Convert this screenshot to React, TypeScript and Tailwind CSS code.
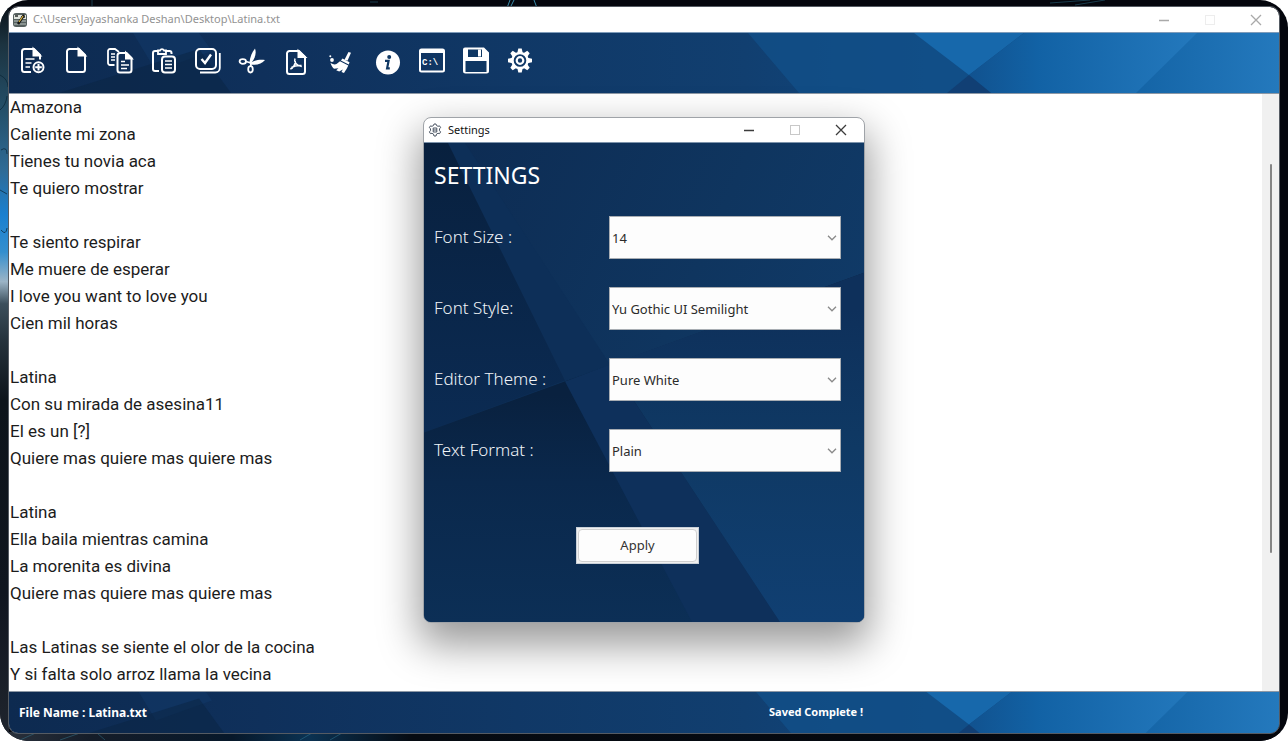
import type { ReactNode } from "react";

const lyrics = `Amazona
Caliente mi zona
Tienes tu novia aca
Te quiero mostrar

Te siento respirar
Me muere de esperar
I love you want to love you
Cien mil horas

Latina
Con su mirada de asesina11
El es un [?]
Quiere mas quiere mas quiere mas

Latina
Ella baila mientras camina
La morenita es divina
Quiere mas quiere mas quiere mas

Las Latinas se siente el olor de la cocina
Y si falta solo arroz llama la vecina`;

type Tool = { label: string; icon: ReactNode };

const fileTools: Tool[] = [
  {
    label: "New file",
    icon: (
      <>
        <path d="M13 25H6.500a2.500 2.500 0 0 1-2.500-2.500V4.500A2.500 2.500 0 0 1 6.500 2H16l6 6v4.500" />
        <path d="M15.500 2v6.500H22z" fill="currentColor" />
        <path d="M7.500 12h9M7.500 16h6M7.500 20h4.500" strokeWidth="1.600" />
        <circle cx="20.500" cy="20.300" r="5" />
        <path d="M20.500 17v6.600M17.200 20.300h6.600" />
      </>
    ),
  },
  {
    label: "Open file",
    icon: (
      <>
        <path d="M7.500 2H17l6 6v14.500a2.500 2.500 0 0 1-2.500 2.500h-13A2.500 2.500 0 0 1 5 22.500v-18A2.500 2.500 0 0 1 7.500 2z" />
        <path d="M16.500 2v6.500H23z" fill="currentColor" />
      </>
    ),
  },
  {
    label: "Copy",
    icon: (
      <>
        <path d="M8.500 18H4a2 2 0 0 1-2-2V4a2 2 0 0 1 2-2h5l4 3" strokeWidth="1.800" />
        <path d="M5 7h4M5 10h4M5 13h4" strokeWidth="1.400" />
        <path d="M14 6h6.500l5 5v12a2.500 2.500 0 0 1-2.500 2.500h-9a2.500 2.500 0 0 1-2.500-2.500V8.500A2.500 2.500 0 0 1 14 6z" />
        <path d="M20 6v5.500h5.500z" fill="currentColor" />
        <path d="M15 14.500h4M15 18h8M15 21.500h6" strokeWidth="1.600" />
      </>
    ),
  },
  {
    label: "Paste",
    icon: (
      <>
        <path d="M8 4H5a2 2 0 0 0-2 2v16a2 2 0 0 0 2 2h4M15 4h4.500a2 2 0 0 1 2 2v1" />
        <path d="M8 3.500h2a2.200 2.200 0 0 1 4 0h2V7H8z" strokeWidth="1.800" />
        <rect x="12" y="9.500" width="13" height="16" rx="3" />
        <path d="M15 14h7M15 17.500h7M15 21h7" strokeWidth="1.600" />
      </>
    ),
  },
  {
    label: "Select all",
    icon: (
      <>
        <rect x="2" y="2" width="20" height="20" rx="4" />
        <path d="m7.500 12 3.500 4 6-8.500" strokeWidth="2.400" />
        <path d="M25.800 6v15a4.500 4.500 0 0 1-4.500 4.500H6" strokeWidth="1.800" />
      </>
    ),
  },
  {
    label: "Cut",
    icon: (
      <>
        <ellipse cx="4.800" cy="14.500" rx="3.200" ry="2.300" strokeWidth="1.800" />
        <ellipse cx="12.500" cy="22.300" rx="2.300" ry="3.200" strokeWidth="1.800" />
        <path d="M8 14.500 13 16M12.800 19l.2-4" strokeWidth="1.800" />
        <path d="M11.500 15.500C12 10 14 5 17 1.500c1.500 4 .3 9-3 13.500z" fill="currentColor" stroke="none" />
        <path d="M11.500 16.500c4-3 10-4.500 15.500-3.500-3 4-8.500 5.500-14 4.500z" fill="currentColor" stroke="none" />
      </>
    ),
  },
  {
    label: "Export PDF",
    icon: (
      <>
        <path d="M7.500 4H17l6 6v14.500a2.500 2.500 0 0 1-2.500 2.500h-13A2.500 2.500 0 0 1 5 24.500v-18A2.500 2.500 0 0 1 7.500 4z" />
        <path d="M16.500 4v6H23z" fill="currentColor" />
        <path d="M13 11.500c-1.300 3 1.500 7.500 6.800 8M13.300 14c.3 3-2 7-5 8M9.500 20.500c2.500-1.500 6-2.300 10-2" strokeWidth="1.500" />
      </>
    ),
  },
  {
    label: "Clear",
    icon: (
      <g fill="currentColor" stroke="none">
        <path d="m22.500 5 2.500.8-3.500 8-3-1z" />
        <path d="m16.500 11.500 7 3.700-.8 2.300-7.800-4z" />
        <path d="m14 14.300 8.300 4.200c-.8 2-2.300 4.500-4.300 7.500l-2.500-1 1.300-2.500-3.600 2-3-1.200 2.300-2-4.500.4c-1.800-1.600-2.900-3.500-3.500-5.700 2.500 1.500 4.500 1.700 6 1z" />
        <circle cx="6" cy="13" r="1.900" />
        <circle cx="4.300" cy="9.300" r="1" />
      </g>
    ),
  },
];

const appTools: Tool[] = [
  {
    label: "About",
    icon: (
      <>
        <circle cx="14" cy="15.500" r="12" fill="currentColor" stroke="none" />
        <circle cx="15.200" cy="10" r="2" fill="#0f3763" stroke="none" />
        <path d="M11 13.800h3.600l-1.500 7.500h2.700" stroke="#0f3763" strokeWidth="2.200" />
      </>
    ),
  },
  {
    label: "Command line",
    icon: (
      <>
        <rect x="2" y="2.500" width="24" height="22" rx="1.500" />
        <path d="M2 4h24" strokeWidth="4" />
        <text x="4" y="17.500" fill="currentColor" stroke="none" className="font-['Liberation_Mono',monospace] text-[9px] font-bold">
          C:\
        </text>
      </>
    ),
  },
  {
    label: "Save",
    icon: (
      <>
        <path d="M1 2.500A2 2 0 0 1 3 .500h19l5 5V24a2.500 2.500 0 0 1-2.500 2.500h-21A2.500 2.500 0 0 1 1 24z" fill="currentColor" stroke="none" />
        <path d="M6 2.500h14v7.500H6zM3.500 14h21v11h-21z" fill="#0f3763" stroke="none" />
        <path d="M16 2.500h3v7h-3z" fill="currentColor" stroke="none" />
      </>
    ),
  },
  {
    label: "Settings",
    icon: (
      <>
        <g fill="currentColor" stroke="none">
          {[0, 45, 90, 135, 180, 225, 270, 315].map((angle) => (
            <path key={angle} d="m12.300 1.500h3.400l1 4.500h-5.400z" transform={`rotate(${angle} 14 13.500)`} />
          ))}
        </g>
        <circle cx="14" cy="13.500" r="7.500" strokeWidth="2.400" />
        <circle cx="14" cy="13.500" r="3.300" strokeWidth="2.200" />
      </>
    ),
  },
];

function ToolButton({ label, icon }: Tool) {
  return (
    <button type="button" aria-label={label} className="flex w-11 justify-center text-white">
      <svg viewBox="0 0 28 28" className="size-7 overflow-visible" fill="none" stroke="currentColor" strokeWidth="2" aria-hidden="true">
        {icon}
      </svg>
    </button>
  );
}

function BarBackdrop() {
  return (
    <svg viewBox="0 0 1270 60" preserveAspectRatio="xMidYMid slice" className="absolute inset-0 -z-10 size-full" aria-hidden="true">
      <defs>
        <linearGradient id="bar-base">
          <stop offset="0" stopColor="#0d2a50" />
          <stop offset=".2" stopColor="#0f305b" />
          <stop offset=".58" stopColor="#113f70" />
          <stop offset=".72" stopColor="#10477f" />
        </linearGradient>
        <linearGradient id="bar-mid">
          <stop offset="0" stopColor="#11528f" />
          <stop offset=".3" stopColor="#1262a5" />
          <stop offset="1" stopColor="#2479bd" />
        </linearGradient>
        <linearGradient id="bar-end">
          <stop offset="0" stopColor="#1464a6" />
          <stop offset="1" stopColor="#2479bd" />
        </linearGradient>
      </defs>
      <path d="M0 0h1270v60H0z" fill="url(#bar-base)" />
      <path d="M124 0h66l13 18-56 20z" fill="#11396a" opacity=".5" />
      <path d="M50 60 190 16l32 44z" fill="#092341" opacity=".5" />
      <path d="M739 0h180l63 60H790z" fill="#11508a" opacity=".75" />
      <path d="M905 0h110l-55 42z" fill="#1768ab" />
      <path d="M1015 0h175l-62 60H982l-22-18z" fill="url(#bar-mid)" />
      <path d="m960 42 22 18h-44z" fill="#113f74" />
      <path d="M1188 0h82v60h-143z" fill="url(#bar-end)" />
    </svg>
  );
}

function DialogBackdrop() {
  return (
    <svg viewBox="0 0 440 480" preserveAspectRatio="none" className="absolute inset-0 -z-10 size-full" aria-hidden="true">
      <defs>
        <linearGradient id="upper" x1="0" y1="0" x2="1" y2=".5">
          <stop offset="0" stopColor="#0d2b52" />
          <stop offset=".6" stopColor="#0f355f" />
          <stop offset="1" stopColor="#103b69" />
        </linearGradient>
        <linearGradient id="upper-edge" x1="0" y1="0" x2="0" y2="1">
          <stop offset="0" stopColor="#08203e" />
          <stop offset="1" stopColor="#0b2b53" />
        </linearGradient>
        <linearGradient id="lower" x1="0" y1="0" x2="0" y2="1">
          <stop offset=".35" stopColor="#09213f" />
          <stop offset=".6" stopColor="#0a284c" />
          <stop offset="1" stopColor="#0c2f56" />
        </linearGradient>
        <linearGradient id="lower-end" x1="0" y1="0" x2="0" y2="1">
          <stop offset=".1" stopColor="#0e305b" />
          <stop offset=".5" stopColor="#0f3964" />
          <stop offset="1" stopColor="#103f72" />
        </linearGradient>
      </defs>
      <path d="M0 0h440v480H0z" fill="url(#upper)" />
      <path d="M0 0h41l145 222L0 290z" fill="#0d2f58" />
      <path d="M0 0h24l117 238L0 290z" fill="url(#upper-edge)" />
      <path d="M0 290 440 130v350H0z" fill="url(#lower)" />
      <path d="m141 239 45-17 170 258h-88z" fill="#0e305b" />
      <path d="M186 222 440 130v350h-84z" fill="url(#lower-end)" />
    </svg>
  );
}

function Wallpaper() {
  return (
    <svg viewBox="0 0 1288 741" preserveAspectRatio="none" className="absolute inset-0 -z-10 size-full" aria-hidden="true">
      <defs>
        <linearGradient id="shore" x1="0" y1="0" x2="0" y2="1">
          <stop offset="0" stopColor="#080d14" />
          <stop offset=".06" stopColor="#1c3340" />
          <stop offset=".15" stopColor="#24506a" />
          <stop offset=".23" stopColor="#2f6b96" />
          <stop offset=".29" stopColor="#1a80d0" />
          <stop offset=".34" stopColor="#348fce" />
          <stop offset=".38" stopColor="#9bb4c6" />
          <stop offset=".41" stopColor="#3c4f5c" />
          <stop offset=".46" stopColor="#25323c" />
          <stop offset=".54" stopColor="#0d141b" />
          <stop offset=".8" stopColor="#10161f" />
          <stop offset="1" stopColor="#20252e" />
        </linearGradient>
        <linearGradient id="bottom">
          <stop offset="0" stopColor="#2b323d" />
          <stop offset=".07" stopColor="#151d29" />
          <stop offset=".18" stopColor="#07182a" />
          <stop offset=".24" stopColor="#0b3252" />
          <stop offset=".32" stopColor="#060b12" />
          <stop offset="1" stopColor="#04060c" />
        </linearGradient>
      </defs>
      <path d="M0 0h1288v741H0z" fill="#04060d" />
      <path d="M0 0h9v741H0z" fill="url(#shore)" />
      <path d="M0 732h1288v9H0z" fill="url(#bottom)" />
      <g fill="none" stroke="#3a8cab">
        <path d="m510 0-3 8M514 0l-4 8M534 0l3 8" />
        <path d="M92 0v6M370 2h8M1050 3l40-3M1075 5l30-5" opacity=".4" />
        <path d="M0 75q8 4 8 12M0 110q6-5 7-14M1 150q6-4 6 4M0 190l7 4M1 230q5 6 6-2" stroke="#0a2536" opacity=".7" />
        <path d="m20 740 18-8M60 740l20-7M105 740l-8-7M300 740l12-7M330 740l12-7" opacity=".4" />
      </g>
    </svg>
  );
}

function WindowButtons({ tone, hollow }: { tone: string; hollow: string }) {
  return (
    <div className="flex h-full">
      <button type="button" aria-label="Minimize" className="flex w-[46px] items-center justify-center">
        <svg viewBox="0 0 12 12" className={`size-3 ${tone}`} stroke="currentColor" fill="none" aria-hidden="true">
          <path d="M1 6.500h10" strokeWidth="1.400" />
        </svg>
      </button>
      <button type="button" aria-label="Maximize" disabled className="flex w-[46px] items-center justify-center">
        <svg viewBox="0 0 12 12" className={`size-3 ${hollow}`} stroke="currentColor" fill="none" aria-hidden="true">
          <rect x="1.500" y="1.500" width="9" height="9" />
        </svg>
      </button>
      <button type="button" aria-label="Close" className="flex w-[46px] items-center justify-center">
        <svg viewBox="0 0 12 12" className={`size-3 ${tone}`} stroke="currentColor" fill="none" aria-hidden="true">
          <path d="m1 1 10 10M11 1 1 11" strokeWidth="1.300" />
        </svg>
      </button>
    </div>
  );
}

const fields = [
  { id: "font-size", label: "Font Size :", options: ["14", "16", "18"] },
  { id: "font-style", label: "Font Style:", options: ["Yu Gothic UI Semilight", "Arial", "Consolas"] },
  { id: "editor-theme", label: "Editor Theme :", options: ["Pure White", "Dark"] },
  { id: "text-format", label: "Text Format :", options: ["Plain", "Bold", "Italic"] },
];

function SettingsDialog() {
  return (
    <div
      role="dialog"
      aria-label="Settings"
      className="flex w-[442px] flex-col overflow-hidden rounded-lg border border-[#9fa3a8] bg-white shadow-[0_18px_40px_4px_rgba(0,0,0,0.4)]"
    >
      <div className="flex h-[25px] items-center border-b border-[#7d93ab] pl-1">
        <svg viewBox="0 0 14 14" className="size-3.5 text-[#4b5563]" fill="none" stroke="currentColor" aria-hidden="true">
          <path d="M5.500 2.500 6 1h2l.5 1.500 1.500.8 1.600-.4 1 1.800-1.100 1.100v1.900l1.100 1.200-1 1.700-1.600-.3-1.500.8L8 13H6l-.5-1.900-1.500-.8-1.600.3-1-1.700 1.100-1.200V5.800L1.400 4.700l1-1.800 1.600.4z" />
          <path d="M5.200 5h3.600v4H5.200zM5.200 7h3.600" />
        </svg>
        <h2 className="ml-1.5 flex-1 text-[11px] text-[#111]">Settings</h2>
        <WindowButtons tone="text-[#3c3c3c]" hollow="text-[#c8c8c8]" />
      </div>
      <form className="relative isolate pt-4 pr-[23px] pb-[58px] pl-2.5" onSubmit={(event) => event.preventDefault()}>
        <DialogBackdrop />
        <h3 className="text-[23px] leading-8 text-white">SETTINGS</h3>
        <div className="mt-[25px] flex flex-col gap-7">
          {fields.map(({ id, label, options }) => (
            <div key={id} className="flex h-[43px] items-center">
              <label htmlFor={id} className="flex-1 pb-0.5 text-[17px] font-light text-[#f0f4f8]">
                {label}
              </label>
              <div className="relative h-full w-[232px]">
                <select id={id} className="size-full appearance-none border border-[#a8adb3] bg-[#fdfdfd] pt-0.5 pl-0.5 text-[13px] text-[#2b2b2b]">
                  {options.map((option) => (
                    <option key={option}>{option}</option>
                  ))}
                </select>
                <svg viewBox="0 0 10 6" className="pointer-events-none absolute top-[19px] right-1 h-1.5 w-2.5 text-[#8a8a8a]" fill="none" stroke="currentColor" strokeWidth="1.300" aria-hidden="true">
                  <path d="m1 .800 4 4 4-4" />
                </svg>
              </div>
            </div>
          ))}
        </div>
        <div className="mt-[55px] flex justify-center">
          <button type="submit" className="h-[37px] w-[123px] border border-[#c9d0d8] bg-[#f0f0f0] p-px">
            <span className="flex size-full items-center justify-center rounded-sm border border-[#d0d0d0] bg-[#fdfdfd] text-[13px] text-[#333]">Apply</span>
          </button>
        </div>
      </form>
    </div>
  );
}

export default function App() {
  return (
    <div className="h-screen bg-white font-['Noto_Sans',sans-serif]">
      <div className="relative isolate flex h-full overflow-hidden rounded-[28px] px-[9px] pt-[7px] pb-2">
        <Wallpaper />
        <main className="flex min-w-0 flex-1 flex-col overflow-hidden rounded-[9px] bg-white outline outline-[#555b63]">
          <header className="flex h-[26px] shrink-0 items-center border-b border-[#7f9cba] pl-1">
            <svg viewBox="0 0 14 14" className="size-3.5" aria-hidden="true">
              <rect width="14" height="14" rx="3" fill="#56605f" />
              <path d="M1 2h12v4H1z" fill="#dfe3dd" />
              <path d="M1 8h12M1 11h12" stroke="#bcc6c2" />
              <path d="M2 3h3M8 4h4" stroke="#292d2d" strokeWidth="1.500" />
              <path d="m5 11 6-9" stroke="#151515" strokeWidth="2.500" />
              <path d="m6 9 4-6" stroke="#e2b93e" strokeWidth="1.200" />
            </svg>
            <h1 className="ml-1.5 flex-1 truncate text-[11px] text-[#929292]">C:\Users\Jayashanka Deshan\Desktop\Latina.txt</h1>
            <WindowButtons tone="text-[#a9a9a9]" hollow="text-[#ededed]" />
          </header>

          <nav aria-label="Tools" className="relative isolate flex h-[60px] shrink-0 items-start gap-1 pt-3.5 pl-px">
            <BarBackdrop />
            <div className="flex">
              {fileTools.map((tool) => (
                <ToolButton key={tool.label} {...tool} />
              ))}
            </div>
            <div className="flex">
              {appTools.map((tool) => (
                <ToolButton key={tool.label} {...tool} />
              ))}
            </div>
          </nav>

          <section className="flex min-h-0 flex-1 border-y border-[#8d98a5]">
            <textarea
              aria-label="Editor"
              spellCheck={false}
              defaultValue={lyrics}
              className="min-w-0 flex-1 resize-none overflow-hidden pl-px font-[Roboto,sans-serif] text-[17px] leading-[27px] text-[#1c1c1c] outline-none"
            />
            <div className="flex w-[17px] justify-center bg-[#f0f0f0] pt-[70px] pb-[138px]">
              <div className="w-0.5 rounded-full bg-[#858585]" />
            </div>
          </section>

          <footer className="relative isolate grid h-[41px] shrink-0 grid-cols-[3fr_2fr] items-center px-2.5 text-xs font-bold text-white">
            <BarBackdrop />
            <p>File Name : Latina.txt</p>
            <p className="text-[11px]">Saved Complete !</p>
          </footer>
        </main>
        <div className="pointer-events-none absolute inset-0 flex items-center justify-center pb-px *:pointer-events-auto">
          <SettingsDialog />
        </div>
      </div>
    </div>
  );
}
